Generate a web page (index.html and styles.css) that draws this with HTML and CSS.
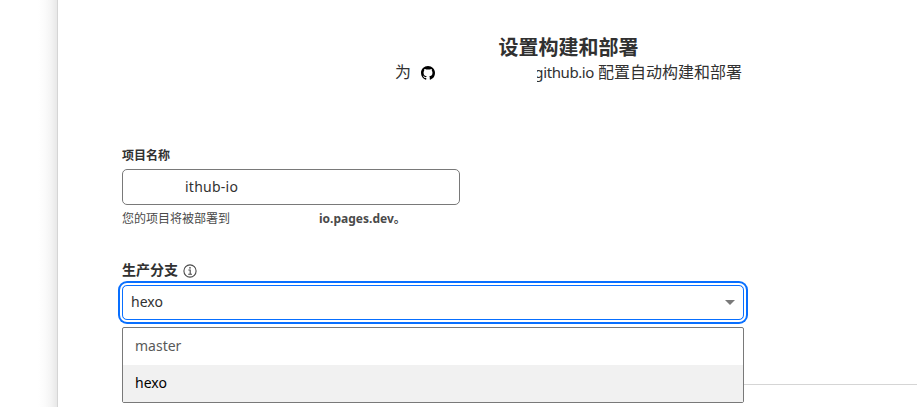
FILE: index.html
```html
<!DOCTYPE html>
<html lang="zh-CN">
<head>
<meta charset="utf-8">
<title>设置构建和部署</title>
<link rel="stylesheet" href="styles.css">
</head>
<body>
<div class="shell">
  <aside class="rail"></aside>
  <main class="main">
    <header class="head">
      <h1 class="title">设置构建和部署</h1>
      <p class="subtitle">
        <span>为</span>
        <svg class="github" viewBox="0 0 16 16"><path d="M8 0C3.58 0 0 3.58 0 8c0 3.54 2.29 6.53 5.47 7.59.4.07.55-.17.55-.38 0-.19-.01-.82-.01-1.49-2.01.37-2.53-.49-2.69-.94-.09-.23-.48-.94-.82-1.13-.28-.15-.68-.52-.01-.53.63-.01 1.08.58 1.23.82.72 1.21 1.87.87 2.33.66.07-.52.28-.87.51-1.07-1.78-.2-3.64-.89-3.64-3.95 0-.87.31-1.59.82-2.15-.08-.2-.36-1.02.08-2.12 0 0 .67-.21 2.2.82a7.6 7.6 0 0 1 4 0c1.53-1.04 2.2-.82 2.2-.82.44 1.1.16 1.92.08 2.12.51.56.82 1.27.82 2.15 0 3.07-1.87 3.75-3.65 3.95.29.25.54.73.54 1.48 0 1.07-.01 1.93-.01 2.2 0 .21.15.46.55.38A8.01 8.01 0 0 0 16 8c0-4.42-3.58-8-8-8z"/></svg>
        <span class="repo"><span class="repo-text">github.io</span></span>
        <span class="action">配置自动构建和部署</span>
      </p>
    </header>
    <form class="form">
      <label class="label small">项目名称</label>
      <div class="input"><span class="input-text">ithub-io</span></div>
      <p class="hint"><span>您的项目将被部署到</span><strong class="domain"><span class="domain-text">io.pages.dev</span>。</strong></p>
      <label class="label branch"><span>生产分支</span>
        <svg class="info" viewBox="0 0 14 14"><circle cx="7" cy="7" r="6.1"/><path d="M5.4 6h1.8v4.2M5.2 10.3h3.8"/><circle class="dot" cx="7" cy="3.8" r=".85"/></svg>
      </label>
      <div class="select">
        <div class="control"><span class="value">hexo</span><svg class="caret" viewBox="0 0 10 5"><path d="M0 0h10L5 5z"/></svg></div>
        <ul class="menu">
          <li class="option master">master</li>
          <li class="option selected">hexo</li>
        </ul>
      </div>
      <hr class="divider">
    </form>
  </main>
</div>
</body>
</html>
```
FILE: styles.css
```css
* { box-sizing: border-box; }
body {
  margin: 0;
  height: 407px;
  overflow: hidden;
  background: #fff;
  color: #313131;
  font: 14px/20px "Noto Sans", "Noto Sans CJK SC", sans-serif;
}
h1, p, ul { margin: 0; padding: 0; }
.shell { display: flex; height: 407px; overflow: hidden; }
.rail {
  flex: 0 0 58px;
  border-right: 1px solid #d5d5d5;
  background: linear-gradient(to right, #fff 38px, #fbfbfb 45px, #f4f4f4 51px, #e8e8e8 57px);
}
.main { flex: 0 0 957px; padding: 35px 0 0 64px; }
.head { height: 111px; }
.title { text-align: center; font-size: 20px; line-height: 26px; font-weight: 700; }
.subtitle {
  display: flex;
  justify-content: center;
  align-items: center;
  height: 22px;
  font-size: 16px;
  line-height: 24px;
}
.github { width: 14px; height: 14px; margin: 2px 0 0 10px; fill: #000; }
.repo { width: 57px; margin-left: 102px; overflow: hidden; display: flex; justify-content: flex-end; }
.repo-text { flex: none; font-size: 15px; letter-spacing: -0.4px; }
.action { margin-left: 4px; }
.label { display: flex; align-items: center; height: 20px; font-weight: 700; }
.small { font-size: 12px; }
.input {
  width: 338px;
  height: 36px;
  margin-top: 3px;
  padding: 7px 0 0 62px;
  border: 1px solid #797979;
  border-radius: 5px;
}
.input-text { font-size: 14px; letter-spacing: 0.25px; }
.hint { display: flex; height: 18px; margin-top: 5px; font-size: 12px; line-height: 18px; color: #4a4a4a; }
.domain { margin-left: 89px; }
.branch { margin-top: 32px; font-size: 14px; }
.info { width: 14px; height: 14px; margin: 1px 0 0 5px; fill: none; stroke: #4a4a4a; stroke-width: 1.1; }
.info .dot { fill: #4a4a4a; stroke: none; }
.select { position: relative; width: 622px; margin-top: 5px; }
.control {
  display: flex;
  align-items: center;
  justify-content: space-between;
  height: 35px;
  padding: 0 8px;
  border: 1px solid #086fff;
  border-radius: 5px;
  box-shadow: 0 0 0 2px #fff, 0 0 0 4px #086fff;
}
.value { padding-bottom: 2px; }
.caret { width: 10px; height: 5px; fill: #797979; }
.menu {
  position: absolute;
  top: 42px;
  left: 0;
  width: 622px;
  height: 76px;
  border: 1px solid #797979;
  border-radius: 2px;
  background: #fff;
  list-style: none;
}
.option { height: 37px; padding-left: 12px; line-height: 36px; color: #595959; }
.selected { background: #f1f1f1; color: #000; }
.divider { height: 1px; margin: 64px 0 0; border: 0; background: #d5d5d5; }
```
